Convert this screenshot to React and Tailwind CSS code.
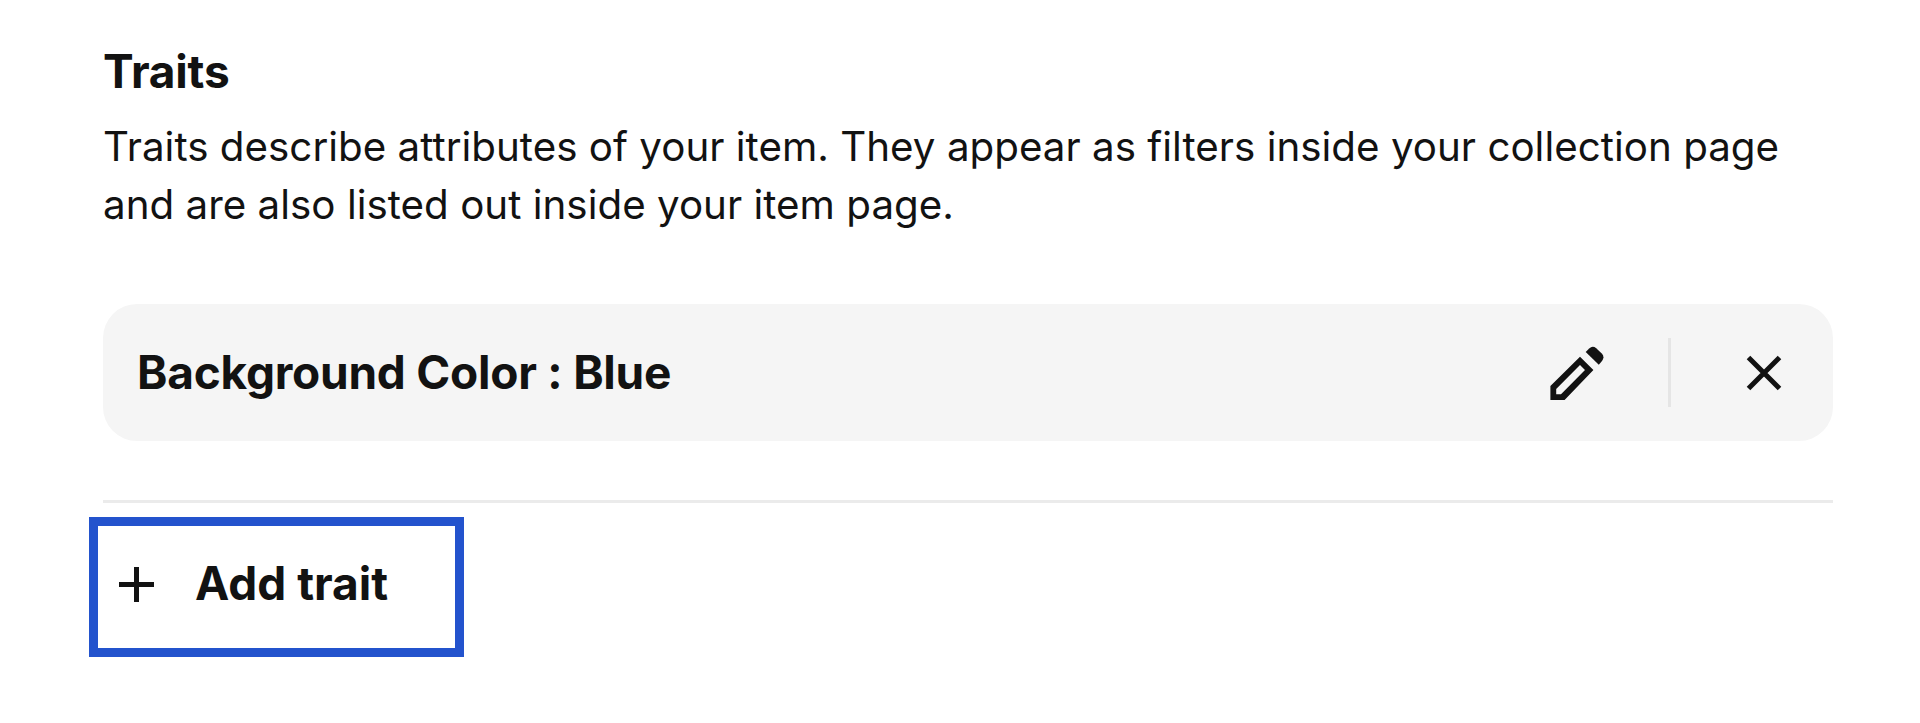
import React from 'react';

const PencilIcon = () => (
  <svg width="54" height="54" viewBox="0 0 54 54" fill="currentColor">
    <path
      fillRule="evenodd"
      d="M.4 54V40L30 10.7 43.4 24 14.6 54ZM6.2 48.2H11L35 24 30 19 6.2 43Z"
    />
    <path d="M35.7 6 39.2 2.4Q42.6-.6 46.2 2.2L51.8 7.6Q55 11 52 14.9L48.8 18.8Z" />
  </svg>
);

const CloseIcon = () => (
  <svg width="36" height="36" viewBox="0 0 36 36" fill="none" stroke="currentColor" strokeWidth="5">
    <path d="M2.5 2.5 33.5 33.5M33.5 2.5 2.5 33.5" />
  </svg>
);

const PlusIcon = () => (
  <svg width="35" height="35" viewBox="0 0 35 35" fill="none" stroke="currentColor" strokeWidth="5">
    <path d="M17.5 0V35M0 17.5H35" />
  </svg>
);

const traits = [{ type: 'Background Color', value: 'Blue' }];

const App = () => {
  return (
    <div className="w-[1920px] h-[723px] overflow-hidden bg-white pt-[37px] pl-[103px] pr-[87px] text-[#121212] font-['Inter',sans-serif] [font-optical-sizing:none] [font-feature-settings:'calt'_0]">
      <h2 className="text-[46px] leading-[69px] font-[650] tracking-[-0.2px]">Traits</h2>
      <p className="mt-[12px] text-[40.3px] leading-[58px] tracking-[0.025px] whitespace-nowrap">
        Traits describe attributes of your item. They appear as filters inside your collection page
        <br />
        and are also listed out inside your item page.
      </p>

      {traits.map((trait) => (
        <div
          key={trait.type}
          className="mt-[70px] h-[137px] flex items-center rounded-[34px] bg-[#f5f5f5] pl-[34px] pr-[51px]"
        >
          <span className="flex-1 text-[46px] leading-[69px] font-[650] tracking-[-0.24px]">
            {trait.type} : {trait.value}
          </span>
          <button type="button" aria-label="Edit trait">
            <PencilIcon />
          </button>
          <div className="ml-[64px] mr-[75px] w-[3px] h-[69px] bg-[#e5e5e5]" />
          <button type="button" aria-label="Remove trait">
            <CloseIcon />
          </button>
        </div>
      ))}

      <div className="mt-[59px] h-[3px] bg-[#ebebeb]" />

      <button
        type="button"
        className="mt-[14px] -ml-[14px] w-[375px] h-[140px] flex items-center border-[9px] border-[#2353cd] pl-[21px] pb-[6px]"
      >
        <PlusIcon />
        <span className="ml-[41px] pb-[2px] text-[46px] leading-[69px] font-[650]">Add trait</span>
      </button>
    </div>
  );
};

export default App;
